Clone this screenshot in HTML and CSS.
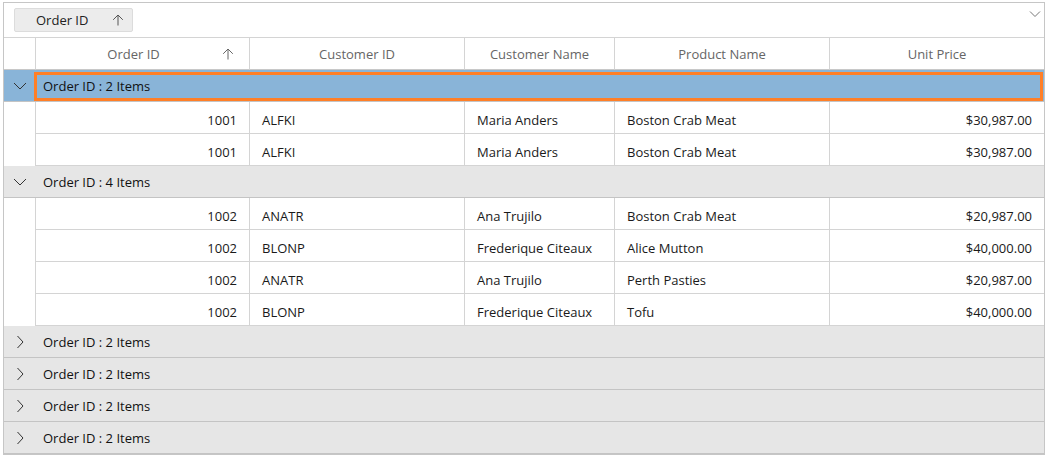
FILE: index.html
```html
<!DOCTYPE html>
<html>
<head>
<meta charset="utf-8">
<link rel="stylesheet" href="styles.css">
</head>
<body>
<div class="grid">
  <div class="droparea">
    <div class="chip"><span class="chip-text">Order ID</span>
      <svg class="chip-arrow" width="12" height="12" viewBox="0 0 12 12"><path d="M6 11.5V1M1.2 5.8L6 1l4.8 4.8" fill="none" stroke="#555" stroke-width="1"/></svg>
    </div>
    <svg class="drop-chevron" width="12" height="8" viewBox="0 0 12 8"><path d="M1 1.5l5 5 5-5" fill="none" stroke="#777" stroke-width="1"/></svg>
  </div>
  <div class="row header">
    <div class="cell indent"></div>
    <div class="cell hc sorted">Order ID
      <svg class="sort-arrow" width="12" height="12" viewBox="0 0 12 12"><path d="M6 11.5V1M1.2 5.8L6 1l4.8 4.8" fill="none" stroke="#666" stroke-width="1"/></svg>
    </div>
    <div class="cell hc">Customer ID</div>
    <div class="cell hc">Customer Name</div>
    <div class="cell hc">Product Name</div>
    <div class="cell hc last">Unit Price</div>
  </div>

  <div class="group selected">
    <div class="expander"><svg width="14" height="8" viewBox="0 0 14 8"><path d="M1 1l6 6 6-6" fill="none" stroke="#333" stroke-width="1"/></svg></div>
    <div class="caption">Order ID : 2 Items</div>
  </div>
  <div class="row">
    <div class="cell indent"></div><div class="cell num">1001</div><div class="cell">ALFKI</div><div class="cell">Maria Anders</div><div class="cell">Boston Crab Meat</div><div class="cell num last">$30,987.00</div>
  </div>
  <div class="row">
    <div class="cell indent"></div><div class="cell num">1001</div><div class="cell">ALFKI</div><div class="cell">Maria Anders</div><div class="cell">Boston Crab Meat</div><div class="cell num last">$30,987.00</div>
  </div>

  <div class="group">
    <div class="expander"><svg width="14" height="8" viewBox="0 0 14 8"><path d="M1 1l6 6 6-6" fill="none" stroke="#333" stroke-width="1"/></svg></div>
    <div class="caption">Order ID : 4 Items</div>
  </div>
  <div class="row">
    <div class="cell indent"></div><div class="cell num">1002</div><div class="cell">ANATR</div><div class="cell">Ana Trujilo</div><div class="cell">Boston Crab Meat</div><div class="cell num last">$20,987.00</div>
  </div>
  <div class="row">
    <div class="cell indent"></div><div class="cell num">1002</div><div class="cell">BLONP</div><div class="cell">Frederique Citeaux</div><div class="cell">Alice Mutton</div><div class="cell num last">$40,000.00</div>
  </div>
  <div class="row">
    <div class="cell indent"></div><div class="cell num">1002</div><div class="cell">ANATR</div><div class="cell">Ana Trujilo</div><div class="cell">Perth Pasties</div><div class="cell num last">$20,987.00</div>
  </div>
  <div class="row">
    <div class="cell indent"></div><div class="cell num">1002</div><div class="cell">BLONP</div><div class="cell">Frederique Citeaux</div><div class="cell">Tofu</div><div class="cell num last">$40,000.00</div>
  </div>

  <div class="group">
    <div class="expander"><svg width="8" height="14" viewBox="0 0 8 14"><path d="M1.5 1l5.5 6-5.5 6" fill="none" stroke="#333" stroke-width="1"/></svg></div>
    <div class="caption">Order ID : 2 Items</div>
  </div>
  <div class="group">
    <div class="expander"><svg width="8" height="14" viewBox="0 0 8 14"><path d="M1.5 1l5.5 6-5.5 6" fill="none" stroke="#333" stroke-width="1"/></svg></div>
    <div class="caption">Order ID : 2 Items</div>
  </div>
  <div class="group">
    <div class="expander"><svg width="8" height="14" viewBox="0 0 8 14"><path d="M1.5 1l5.5 6-5.5 6" fill="none" stroke="#333" stroke-width="1"/></svg></div>
    <div class="caption">Order ID : 2 Items</div>
  </div>
  <div class="group">
    <div class="expander"><svg width="8" height="14" viewBox="0 0 8 14"><path d="M1.5 1l5.5 6-5.5 6" fill="none" stroke="#333" stroke-width="1"/></svg></div>
    <div class="caption">Order ID : 2 Items</div>
  </div>
</div>
</body>
</html>
```

FILE: styles.css
```css
html, body {
  margin: 0;
  padding: 0;
  background: #ffffff;
}
body {
  padding: 2px 0 0 3px;
  font-family: "Open Sans", "Noto Sans", "Liberation Sans", sans-serif;
  font-size: 13px;
  color: #1a1a1a;
}
.grid {
  width: 1042px;
  box-sizing: border-box;
  border: 1px solid #c6c6c6;
  background: #fff;
}
.droparea {
  height: 34px;
  border-bottom: 1px solid #d4d4d4;
  display: flex;
  align-items: flex-start;
  padding-left: 10px;
  position: relative;
}
.chip {
  margin-top: 5px;
  width: 119px;
  height: 24px;
  box-sizing: border-box;
  background: #ececec;
  border: 1px solid #dcdcdc;
  border-radius: 2px;
  display: flex;
  align-items: center;
  padding-left: 21px;
  color: #222;
}
.chip-text {
  flex: 1;
}
.chip-arrow {
  margin-right: 8px;
}
.drop-chevron {
  position: absolute;
  right: 3px;
  top: 7px;
}
.row {
  display: grid;
  grid-template-columns: 32px 214px 215px 150px 215px 214px;
  height: 32px;
}
.cell {
  border-right: 1px solid #d4d4d4;
  border-bottom: 1px solid #d4d4d4;
  box-sizing: border-box;
  padding: 4px 12px 0;
  display: flex;
  align-items: center;
  white-space: nowrap;
  overflow: hidden;
}
.cell.last {
  border-right: none;
}
.cell.indent {
  padding: 0;
  border-bottom: none;
}
.cell.num {
  justify-content: flex-end;
}
.header .hc {
  justify-content: center;
  color: #666;
  padding: 0;
  border-bottom-color: #c8c8c8;
}
.header .cell.indent {
  border-bottom: 1px solid #c8c8c8;
}
.header .hc.sorted {
  position: relative;
  padding-right: 18px;
}
.sort-arrow {
  position: absolute;
  right: 15px;
  top: 10px;
}
.group {
  display: flex;
  height: 32px;
  box-sizing: border-box;
  background: #e6e6e6;
  border-bottom: 1px solid #c4c4c4;
}
.group.selected {
  background: #89b4d8;
}
.expander {
  width: 30px;
  display: flex;
  align-items: center;
  justify-content: center;
  padding-left: 1px;
  box-sizing: border-box;
}
.caption {
  flex: 1;
  margin: 2px 1px 0 0;
  height: 29px;
  box-sizing: border-box;
  border: 3px solid transparent;
  padding: 0 0 1px 6px;
  display: flex;
  align-items: center;
  color: #111;
}
.group.selected .caption {
  border-color: #ff7f27;
}
```
